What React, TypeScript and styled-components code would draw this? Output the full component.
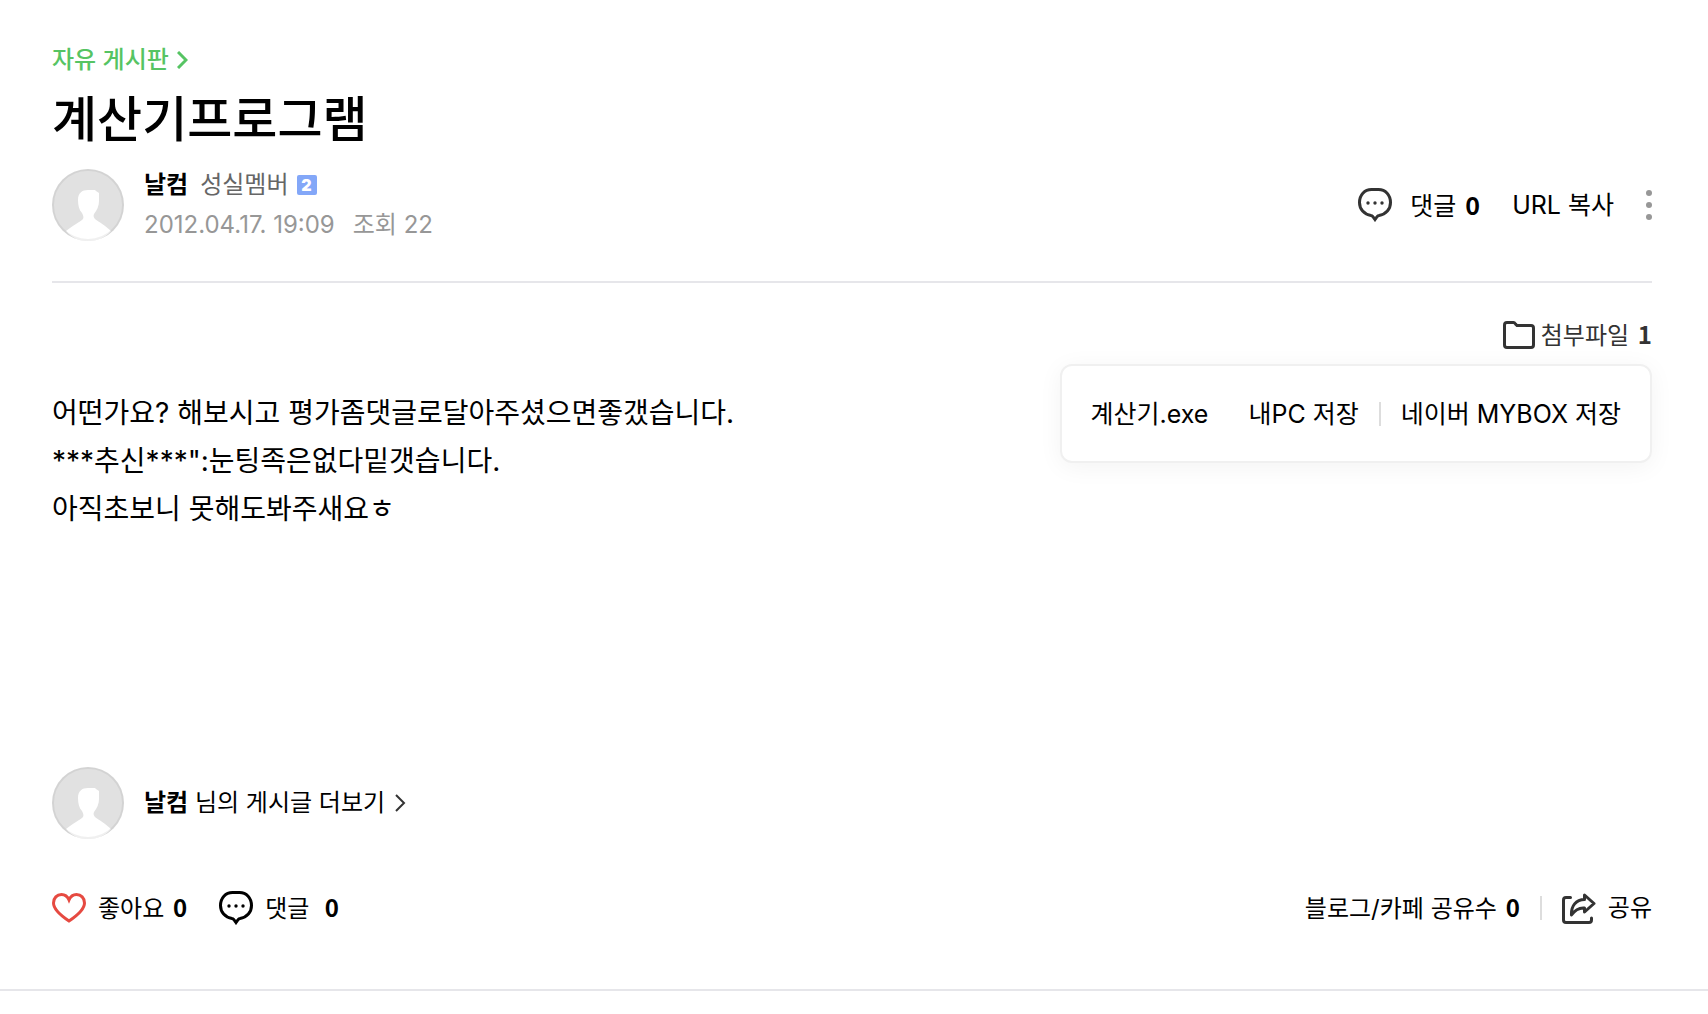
import React from "react";
import styled, { createGlobalStyle } from "styled-components";

const GlobalStyle = createGlobalStyle`
  *, *::before, *::after { box-sizing: border-box; }
  body {
    margin: 0;
    background: #fff;
    color: #000;
    font-family: Inter, "Noto Sans CJK KR", sans-serif;
    font-size: 24px;
    line-height: 40px;
  }
  h1, p { margin: 0; }
  a { color: inherit; text-decoration: none; }
  svg { display: block; flex: none; }
`;

const Article = styled.article`
  padding: 40px 56px 60px 52px;
  border-bottom: 2px solid #e6e6ea;
`;

const BoardLink = styled.a`
  display: inline-flex;
  align-items: center;
  gap: 8px;
  color: #56c463;
  font-weight: 500;
`;

const Title = styled.h1`
  font-size: 49px;
  line-height: 80px;
  font-weight: 500;
`;

const Header = styled.header`
  padding-bottom: 36px;
  border-bottom: 2px solid #e6e6ea;
`;

const Row = styled.div<{ $gap?: number }>`
  display: flex;
  align-items: center;
  gap: ${(p) => p.$gap ?? 0}px;
`;

const Bar = styled.div`
  display: flex;
  align-items: center;
  justify-content: space-between;
`;

const AuthorBar = styled(Bar)`
  padding-top: 5px;
`;

const Actions = styled.div`
  display: flex;
  align-items: center;
  gap: 32px;
  font-size: 25px;
`;

const Name = styled.strong`
  font-weight: 700;
`;

const Count = styled.strong`
  margin-left: 2px;
  font-family: "Noto Sans CJK KR", sans-serif;
  font-weight: 700;
`;

const Level = styled.span`
  margin-left: 4px;
  color: #666;
`;

const Badge = styled.span`
  width: 20px;
  height: 20px;
  border-radius: 2px;
  background: #83a7f8;
  color: #fff;
  font: 900 16px/20px Inter, sans-serif;
  text-align: center;
`;

const Meta = styled.div`
  display: flex;
  gap: 18px;
  color: #979797;
`;

const Control = styled.button`
  display: inline-flex;
  align-items: baseline;
  padding: 0;
  border: 0;
  background: none;
  color: inherit;
  font: inherit;
  white-space: pre;
  cursor: pointer;
`;

const AttachArea = styled.div`
  position: relative;
  display: flex;
  justify-content: flex-end;
  padding-top: 31px;
`;

const AttachButton = styled(Control)`
  align-items: center;
  gap: 6px;
  color: #333;
`;

const AttachLayer = styled.div`
  position: absolute;
  top: 100%;
  right: 0;
  margin-top: 8px;
  display: flex;
  align-items: center;
  height: 99px;
  padding: 0 29px;
  border: 2px solid #f0f0f0;
  border-radius: 12px;
  background: #fff;
  box-shadow: 0 4px 24px rgba(0, 0, 0, 0.05);
  font-size: 25px;
  white-space: nowrap;
`;

const FileName = styled.span`
  margin-right: 40px;
`;

const Separator = styled.span`
  width: 2px;
  height: 24px;
  margin: 0 20px;
  background: #ddd;
`;

const Content = styled.div`
  min-height: 411px;
  padding-top: 33px;
  font-size: 28px;
  line-height: 48px;
`;

const Reactions = styled(Bar)`
  padding-top: 48px;
`;

const Avatar = () => (
  <svg width="72" height="72" viewBox="0 0 72 72" aria-hidden="true">
    <circle cx="36" cy="36" r="36" fill="#e1e1e1" />
    <path
      d="M14 62C20 57 28 53 31 50C32 48 31 46 30 44C27 41 26 36 26 31C26 24 30 21 36 21H43L44 22L47 24C47 26 47 29 47 32C47 37 45 41 42 45C41 47 42 49 43 50C47 53 54 57 59 62C53 69 45 72 36 72S20 69 14 62Z"
      fill="#fff"
    />
    <circle cx="36" cy="36" r="35" fill="none" stroke="#000" strokeOpacity=".06" strokeWidth="2" />
  </svg>
);

const CommentIcon = ({ color = "#000" }: { color?: string }) => (
  <svg width="34" height="34" viewBox="0 0 34 34" fill="none" aria-hidden="true">
    <path
      d="M13.500 1.500H20.500C27.500 1.500 32.500 7 32.500 14.500C32.500 21 28 26.500 21 27.500C19.500 27.500 18 30 17 31.500C16 30 14.500 27.500 13 27.500C6 26.500 1.500 21 1.500 14.500C1.500 7 6.500 1.500 13.500 1.500Z"
      stroke={color}
      strokeWidth="3"
    />
    <g fill={color}>
      <circle cx="10" cy="15" r="1.700" />
      <circle cx="17" cy="15" r="1.700" />
      <circle cx="24" cy="15" r="1.700" />
    </g>
  </svg>
);

const Chevron = ({ color, weight }: { color: string; weight: number }) => (
  <svg width="11" height="18" viewBox="0 0 11 18" fill="none" aria-hidden="true">
    <path d="M1 1L9 9L1 17" stroke={color} strokeWidth={weight} />
  </svg>
);

const MoreIcon = () => (
  <svg width="6" height="30" viewBox="0 0 6 30" fill="#979797" aria-hidden="true">
    <circle cx="3" cy="3" r="3" />
    <circle cx="3" cy="15" r="3" />
    <circle cx="3" cy="27" r="3" />
  </svg>
);

const FolderIcon = () => (
  <svg width="32" height="28" viewBox="0 0 32 28" fill="none" aria-hidden="true">
    <path
      d="M1.500 4Q1.500 1.500 4 1.500H10.500Q11.500 1.500 12.500 3L14 4.500H28Q30.500 4.500 30.500 7V24Q30.500 26.500 28 26.500H4Q1.500 26.500 1.500 24Z"
      stroke="#333"
      strokeWidth="3"
    />
  </svg>
);

const HeartIcon = () => (
  <svg width="34" height="30" viewBox="0 0 34 30" fill="none" aria-hidden="true">
    <path
      d="M17 28C11 24 1.500 17.500 1.500 10C1.500 5 5 1.500 9.500 1.500C13 1.500 15.500 3.500 17 7C18.500 3.500 21 1.500 24.500 1.500C29 1.500 32.500 5 32.500 10C32.500 17.500 23 24 17 28Z"
      stroke="#e64a41"
      strokeWidth="3"
    />
  </svg>
);

const ShareIcon = () => (
  <svg
    width="34"
    height="31"
    viewBox="0 0 34 31"
    fill="none"
    stroke="#333"
    strokeWidth="3"
    strokeLinecap="round"
    strokeLinejoin="round"
    aria-hidden="true"
  >
    <path d="M8.500 4.500H4Q1.500 4.500 1.500 7V27Q1.500 29.500 4 29.500H27Q29.500 29.500 29.500 27V25" />
    <path d="M22.500 2L32 10.500L22.500 19V15C17 14.500 13 17 9.500 22C9 13 14 6.500 22.500 6.500Z" />
  </svg>
);

export default function App() {
  return (
    <>
      <GlobalStyle />
      <Article>
        <Header>
          <BoardLink href="#board">
            자유 게시판
            <Chevron color="#56c463" weight={3} />
          </BoardLink>
          <Title>계산기프로그램</Title>
          <AuthorBar>
            <Row $gap={20}>
              <Avatar />
              <div>
                <Row $gap={8}>
                  <Name>날컴</Name>
                  <Level>성실멤버</Level>
                  <Badge>2</Badge>
                </Row>
                <Meta>
                  <time dateTime="2012-04-17T19:09">2012.04.17. 19:09</time>
                  <span>조회 22</span>
                </Meta>
              </div>
            </Row>
            <Actions>
              <Row $gap={18}>
                <CommentIcon color="#333" />
                <Control type="button">
                  댓글 <Count>0</Count>
                </Control>
              </Row>
              <Control type="button">URL 복사</Control>
              <Control type="button" aria-label="더보기">
                <MoreIcon />
              </Control>
            </Actions>
          </AuthorBar>
        </Header>
        <AttachArea>
          <AttachButton type="button">
            <FolderIcon />
            <span>
              첨부파일 <Count>1</Count>
            </span>
          </AttachButton>
          <AttachLayer>
            <FileName>계산기.exe</FileName>
            <a href="#pc">내PC 저장</a>
            <Separator />
            <a href="#mybox">네이버 MYBOX 저장</a>
          </AttachLayer>
        </AttachArea>
        <Content>
          <p>어떤가요? 해보시고 평가좀댓글로달아주셨으면좋갰습니다.</p>
          <p>***추신***":눈팅족은없다밑갯습니다.</p>
          <p>아직초보니 못해도봐주새요ㅎ</p>
        </Content>
        <Row $gap={20}>
          <Avatar />
          <a href="#more">
            <Row $gap={10}>
              <span>
                <Name>날컴</Name> 님의 게시글 더보기
              </span>
              <Chevron color="#333" weight={2} />
            </Row>
          </a>
        </Row>
        <Reactions>
          <Row $gap={32}>
            <Row $gap={12}>
              <HeartIcon />
              <Control type="button">
                좋아요 <Count>0</Count>
              </Control>
            </Row>
            <Row $gap={12}>
              <CommentIcon />
              <Control type="button">
                댓글  <Count>0</Count>
              </Control>
            </Row>
          </Row>
          <Row>
            <span>
              블로그/카페 공유수 <Count>0</Count>
            </span>
            <Separator />
            <Control type="button">
              <Row $gap={12}>
                <ShareIcon />
                공유
              </Row>
            </Control>
          </Row>
        </Reactions>
      </Article>
    </>
  );
}
